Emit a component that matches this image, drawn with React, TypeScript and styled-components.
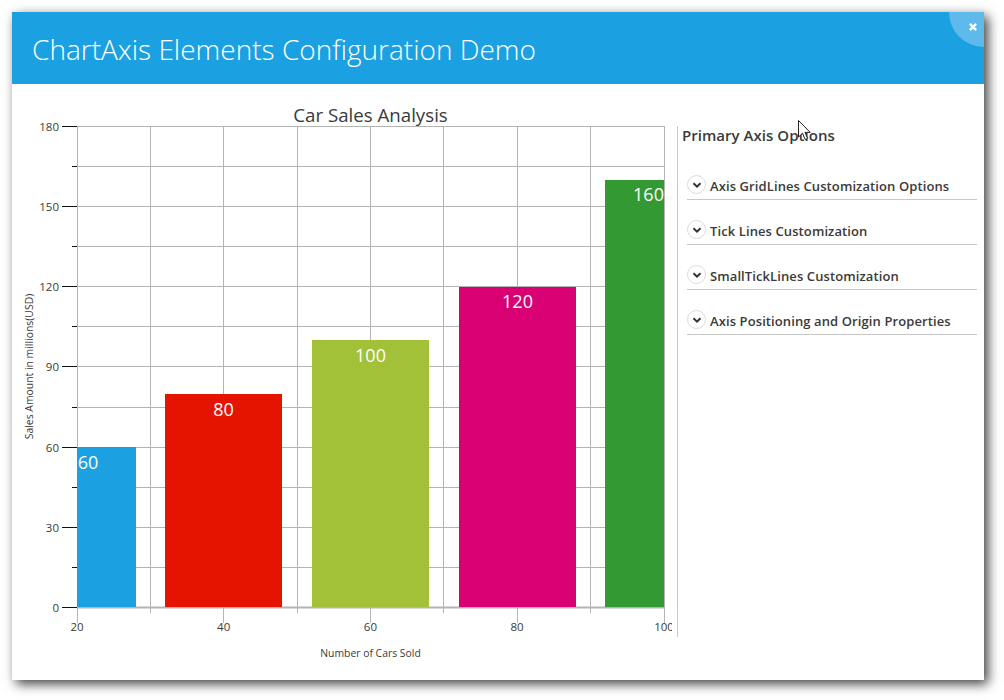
import React from "react"
import styled, { createGlobalStyle } from "styled-components"

const GlobalStyle = createGlobalStyle`
html, body {
  margin: 0;
  background: #fff;
  font-family: "Open Sans", "Noto Sans", "Liberation Sans", sans-serif;
}
`

const Page = styled.div`
  width: 1004px;
  height: 700px;
  padding: 12px 20px 20px 12px;
  box-sizing: border-box;
  overflow: hidden;
  position: relative;
`

const Window = styled.div`
  width: 972px;
  height: 668px;
  background: #fff;
  box-shadow: 4px 4px 11px rgba(0, 0, 0, 0.75);
  display: flex;
  flex-direction: column;
`

const Header = styled.header`
  height: 72px;
  flex: none;
  background: #1ba1e2;
  position: relative;
  overflow: hidden;
  display: flex;
  align-items: center;
  padding-left: 20px;
`

const Title = styled.h1`
  margin: 2px 0 0;
  color: #fff;
  font-size: 28px;
  font-weight: 300;
`

const CloseCorner = styled.div`
  position: absolute;
  top: -35px;
  right: -35px;
  width: 70px;
  height: 70px;
  border-radius: 50%;
  background: #5fbaec;
`

const CloseIcon = styled.svg`
  position: absolute;
  top: 11px;
  right: 7px;
`

const Body = styled.div`
  flex: 1;
  display: flex;
  min-height: 0;
`

const ChartPane = styled.div`
  width: 665px;
  flex: none;
`

const SidePane = styled.aside`
  width: 300px;
  height: 511px;
  margin-top: 42px;
  border-left: 1px solid #c8c8c8;
  box-sizing: border-box;
  padding-left: 4px;
`

const SideTitle = styled.h2`
  margin: 0;
  height: 29px;
  line-height: 18px;
  color: #3a3a3a;
  font-size: 15px;
  font-weight: 600;
  letter-spacing: 0.04px;
`

const OptionList = styled.div`
  margin-left: 5px;
  width: 290px;
`

const OptionRow = styled.div`
  height: 45px;
  border-bottom: 1px solid #c8c8c8;
  display: flex;
  align-items: flex-end;
  gap: 4px;
  padding-bottom: 5px;
  box-sizing: border-box;
`

const Expander = styled.span`
  width: 19px;
  height: 19px;
  flex: none;
  border: 1px solid #dcdcdc;
  border-radius: 50%;
  box-sizing: border-box;
  display: flex;
  align-items: center;
  justify-content: center;
`

const OptionLabel = styled.span`
  color: #3a3a3a;
  font-size: 13px;
  font-weight: 600;
  line-height: 18px;
  letter-spacing: 0.1px;
  margin-bottom: -1px;
`

const Pointer = styled.svg`
  position: absolute;
  left: 798px;
  top: 120px;
`

const options = [
  "Axis GridLines Customization Options",
  "Tick Lines Customization",
  "SmallTickLines Customization",
  "Axis Positioning and Origin Properties",
]

const originX = 65
const originY = 43
const columnStep = 73.375
const rowStep = 40.08

const bars = [
  { x: 65, w: 59, top: 363, color: "#1ba1e2", label: "60", labelX: 76, labelY: 385 },
  { x: 153, w: 117, top: 310, color: "#e51400", label: "80", labelX: 211.5, labelY: 332 },
  { x: 300, w: 117, top: 256, color: "#a2c138", label: "100", labelX: 358.5, labelY: 278 },
  { x: 447, w: 117, top: 203, color: "#d80073", label: "120", labelX: 505.5, labelY: 224 },
  { x: 593, w: 59, top: 96, color: "#339933", label: "160", labelX: 636.5, labelY: 117 },
]

const CarChart = () => {
  const bottom = originY + rowStep * 12
  const right = originX + columnStep * 8
  const rows = Array.from({ length: 13 }, (_, i) => i)
  const columns = Array.from({ length: 9 }, (_, i) => i)
  return (
    <svg width="665" height="596" fontFamily='"Open Sans", sans-serif'>
      <text x="358.5" y="37.5" textAnchor="middle" fontSize="18.7" fill="#3a3a3a">
        Car Sales Analysis
      </text>
      {rows.map((i) => (
        <line key={i} x1={originX} x2={right} y1={Math.round(originY + i * rowStep) - 0.5} y2={Math.round(originY + i * rowStep) - 0.5} stroke="#b4b4b4" />
      ))}
      {columns.map((i) => {
        const x = Math.floor(originX + i * columnStep) + 0.5
        return <line key={i} x1={x} x2={x} y1={originY - 1} y2={bottom + (i % 2 ? 5 : 15)} stroke="#b4b4b4" />
      })}
      <line x1={originX} x2={right} y1={bottom - 0.5} y2={bottom - 0.5} stroke="#b4b4b4" strokeWidth="2" />
      {rows.map((i) => {
        const y = Math.round(originY + i * rowStep) - 0.5
        return <line key={i} x1={i % 2 ? 60 : 50} x2={originX} y1={y} y2={y} stroke="#111" />
      })}
      {bars.map((b) => (
        <g key={b.label}>
          <rect x={b.x} y={b.top} width={b.w} height={523 - b.top} fill={b.color} />
          <text x={b.labelX} y={b.labelY} textAnchor="middle" fontSize="18" fill="#fff">
            {b.label}
          </text>
        </g>
      ))}
      {[180, 150, 120, 90, 60, 30, 0].map((v, i) => (
        <text key={v} x="47" y={Math.round(originY + i * 2 * rowStep) + 4} textAnchor="end" fontSize="11.5" fill="#3a3a3a">
          {v}
        </text>
      ))}
      {[20, 40, 60, 80].map((v, i) => (
        <text key={v} x={65 + i * 146.7} y="547" textAnchor="middle" fontSize="11.5" fill="#3a3a3a">
          {v}
        </text>
      ))}
      <svg x="630" y="529" width="30" height="30">
        <text x="22" y="18" textAnchor="middle" fontSize="11.5" fill="#3a3a3a">100</text>
      </svg>
      <text x="358.5" y="573" textAnchor="middle" fontSize="10.4" fill="#3a3a3a">
        Number of Cars Sold
      </text>
      <text transform="translate(21 282.5) rotate(-90)" textAnchor="middle" fontSize="10.4" fill="#3a3a3a">
        Sales Amount in millions(USD)
      </text>
    </svg>
  )
}

const App = () => {
  return (
    <Page>
      <GlobalStyle />
      <Window>
        <Header>
          <Title>ChartAxis Elements Configuration Demo</Title>
          <CloseCorner />
          <CloseIcon width="8" height="8" viewBox="0 0 9 9">
            <path d="M1 1 8 8M8 1 1 8" stroke="#fff" strokeWidth="2.6" />
          </CloseIcon>
        </Header>
        <Body>
          <ChartPane>
            <CarChart />
          </ChartPane>
          <SidePane>
            <SideTitle>Primary Axis Options</SideTitle>
            <OptionList>
              {options.map((o) => (
                <OptionRow key={o}>
                  <Expander>
                    <svg width="10" height="8" viewBox="0 0 10 8">
                      <path d="M1.5 2.2 5 5.7 8.5 2.2" fill="none" stroke="#333" strokeWidth="2" />
                    </svg>
                  </Expander>
                  <OptionLabel>{o}</OptionLabel>
                </OptionRow>
              ))}
            </OptionList>
          </SidePane>
        </Body>
      </Window>
      <Pointer width="13" height="20" viewBox="0 0 13 20">
        <path d="M0.5 0.5V17L4.5 13.2 7.2 19.5 9.6 18.5 7 12.4H12.2Z" fill="#fff" stroke="#222" strokeWidth="1" />
      </Pointer>
    </Page>
  )
}

export default App
